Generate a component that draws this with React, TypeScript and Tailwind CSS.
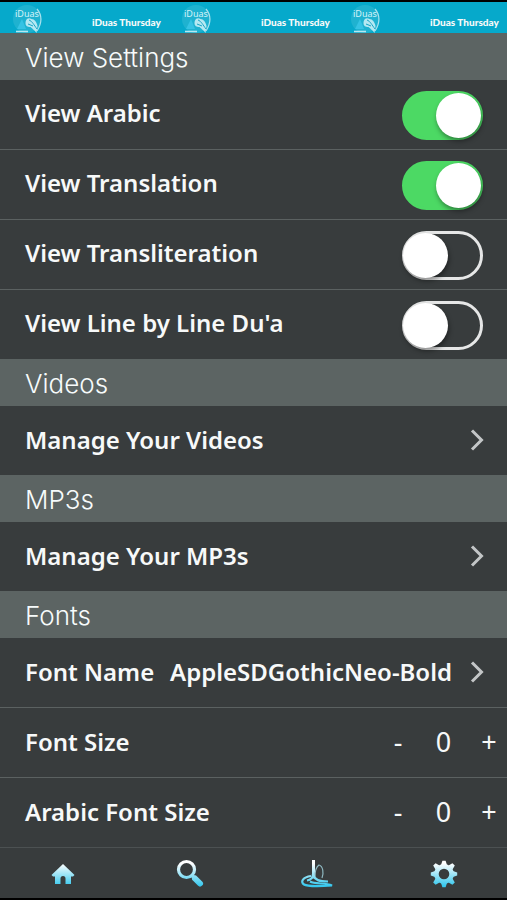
import React, { useState } from 'react';

const ROW = 'flex h-[69px] w-full items-center pl-[25px] pt-0.5 text-left text-2xl font-semibold';

const SectionHeader: React.FC<{ title: string }> = ({ title }) => (
  <h2 className="flex h-[47px] items-center bg-[#5c6463] pl-[25px] pt-0.5 font-['Inter',sans-serif] text-[26px] font-light text-[#f7fbfb]">
    {title}
  </h2>
);

const ToggleRow: React.FC<{ id: string; label: string; initial?: boolean }> = ({ id, label, initial = false }) => {
  const [on, setOn] = useState(initial);

  return (
    <div className={`${ROW} justify-between pr-6`}>
      <label htmlFor={id} className="pb-1.5">{label}</label>
      <input
        id={id}
        type="checkbox"
        role="switch"
        checked={on}
        onChange={() => setOn(!on)}
        className="relative h-[49px] w-[81px] shrink-0 appearance-none rounded-full border-[3px] border-[#e6e7e7] before:absolute before:-left-0.5 before:-top-px before:size-[45px] before:rounded-full before:bg-white before:shadow-[1px_3px_5px_rgba(0,0,0,0.4)] checked:border-[#4cd964] checked:bg-[#4cd964] checked:before:left-[31px]"
      />
    </div>
  );
};

const Chevron = () => (
  <svg viewBox="0 0 14 22" className="h-[22px] w-3.5 shrink-0" fill="none" stroke="#c3c6c7" strokeWidth="3" aria-hidden="true">
    <path d="M2 1.5 11.5 11 2 20.5" />
  </svg>
);

const LinkRow: React.FC<{ label: string; value?: string }> = ({ label, value }) => (
  <button type="button" className={`${ROW} justify-between pr-[23px]`}>
    <span className="pb-1">{label}</span>
    <span className="flex items-center gap-[18px] pb-1">
      {value && <span>{value}</span>}
      <Chevron />
    </span>
  </button>
);

const StepperRow: React.FC<{ label: string }> = ({ label }) => {
  const [value, setValue] = useState(0);

  return (
    <div className={`${ROW} justify-between pr-0.5`}>
      <span className="pb-1">{label}</span>
      <div className="flex items-center pb-1 text-center text-[27px] font-normal">
        <button type="button" className="w-8" aria-label={`Decrease ${label}`} onClick={() => setValue(value - 1)}>-</button>
        <output className="w-[59px]">{value}</output>
        <button type="button" className="w-8" aria-label={`Increase ${label}`} onClick={() => setValue(value + 1)}>+</button>
      </div>
    </div>
  );
};

const BannerItem = () => (
  <div className="flex items-center pl-3">
    <svg viewBox="0 0 30 30" className="h-[30px] w-[30px] shrink-0" aria-hidden="true">
      <circle cx="15" cy="16" r="14" fill="#1fb2d0" />
      <path d="M25 6c5 6 5 14 0 22" fill="none" stroke="#a9e2ee" strokeWidth="1.2" />
      <path d="m5 26 5-10 4 10z" fill="#35c3e4" />
      <path d="M13.500 20c0-4 3-6 6-4 3 0 5 3 6 7l-1 7c-2-3-4-4-6-6-3 0-5-1-5-4z" fill="#b5e8f2" />
      <path d="M17 17c3 1 5 5 8 9M16 21l5 2" fill="none" stroke="#18a5c5" strokeWidth="1" />
      <text x="3" y="14" fontSize="9" fontFamily="Noto Sans, sans-serif" fill="#d3f3f8">iDuas</text>
      <path d="M4 28.500h12" stroke="#b5e8f2" strokeWidth="1.6" />
    </svg>
    <span className="pl-[50px] pt-2 font-['Lato',sans-serif] text-[10px] leading-4 font-black whitespace-nowrap">
      iDuas Thursday
    </span>
  </div>
);

const TABS = [
  {
    name: 'Home',
    icon: <path d="M16 7 27.500 18 26 19.500h-2V27h-5.500v-5.500a2.500 2.500 0 0 0-5 0V27H8v-7.500H6L4.500 18z" fill="url(#ice)" />,
  },
  {
    name: 'Search',
    icon: (
      <g fill="none" stroke="url(#ice)">
        <circle cx="12.500" cy="12.500" r="8" strokeWidth="3.200" />
        <path d="m21 21.500 5 5" strokeWidth="6" strokeLinecap="round" />
        <path d="m17.500 18 4 4" strokeWidth="3.500" />
      </g>
    ),
  },
  {
    name: 'Duas',
    icon: (
      <g fill="none" stroke="url(#ice)">
        <path d="M12.500 3v18.500" strokeWidth="3" />
        <path d="M14 20c0-6 1-10 4-12 4 1 5 8 3 13" stroke="#8fb9c2" strokeWidth="1.200" />
        <path d="M12 17c0 4-3 6-6 6.500M12 18c2 5 6 6.500 15 6.500" strokeWidth="2.200" />
        <path d="M10 19C2 20-1 25 3 27.500c3 2 12 2 28 1-7-3-17-1-22-4" strokeWidth="2.200" />
      </g>
    ),
  },
  {
    name: 'Settings',
    icon: (
      <g fill="url(#ice)">
        <circle cx="16" cy="17" r="7.600" fill="none" stroke="url(#ice)" strokeWidth="4.600" />
        <path d="m13 8 1.400-4.200h3.200L19 8zM13 26l1.400 4.200h3.200L19 26zM7 14l-4.200 1.400v3.200L7 20zM25 14l4.200 1.400v3.200L25 20z" />
        <path d="M7.500 12.500 5.200 8.600l2.400-2.400L11.500 8.500zM20.500 8.500l3.900-2.300 2.400 2.400-2.300 3.900zM7.500 21.500l-2.300 3.900 2.400 2.400 3.900-2.300zM24.500 21.500l2.300 3.900-2.400 2.400-3.900-2.300z" />
      </g>
    ),
  },
];

export default function App() {
  return (
    <div className="flex min-h-screen flex-col border-y-2 border-black bg-[#383c3d] font-['Noto_Sans',sans-serif] text-[#f7f9f9]">
      <svg className="absolute size-0" aria-hidden="true">
        <linearGradient id="ice" gradientUnits="userSpaceOnUse" x1="0" y1="4" x2="0" y2="29">
          <stop offset="0.1" stopColor="#ffffff" />
          <stop offset="1" stopColor="#35c8ee" />
        </linearGradient>
      </svg>

      <header className="grid h-[31px] grid-cols-3 overflow-hidden bg-[#06a9cb]">
        <BannerItem />
        <BannerItem />
        <BannerItem />
      </header>

      <main className="flex-1">
        <SectionHeader title="View Settings" />
        <div className="grid gap-px bg-[#5b6161] *:bg-[#383c3d]">
          <ToggleRow id="arabic" label="View Arabic" initial />
          <ToggleRow id="translation" label="View Translation" initial />
          <ToggleRow id="transliteration" label="View Transliteration" />
          <ToggleRow id="line-by-line" label="View Line by Line Du'a" />
        </div>

        <SectionHeader title="Videos" />
        <LinkRow label="Manage Your Videos" />

        <SectionHeader title="MP3s" />
        <LinkRow label="Manage Your MP3s" />

        <SectionHeader title="Fonts" />
        <div className="grid gap-px bg-[#5b6161] *:bg-[#383c3d]">
          <LinkRow label="Font Name" value="AppleSDGothicNeo-Bold" />
          <StepperRow label="Font Size" />
          <StepperRow label="Arabic Font Size" />
        </div>
      </main>

      <nav className="grid h-[51px] grid-cols-4 border-t border-[#4c5152]">
        {TABS.map(tab => (
          <button key={tab.name} type="button" aria-label={tab.name} className="flex items-center justify-center">
            <svg viewBox="0 0 32 32" className="size-8" aria-hidden="true">{tab.icon}</svg>
          </button>
        ))}
      </nav>
    </div>
  );
}
